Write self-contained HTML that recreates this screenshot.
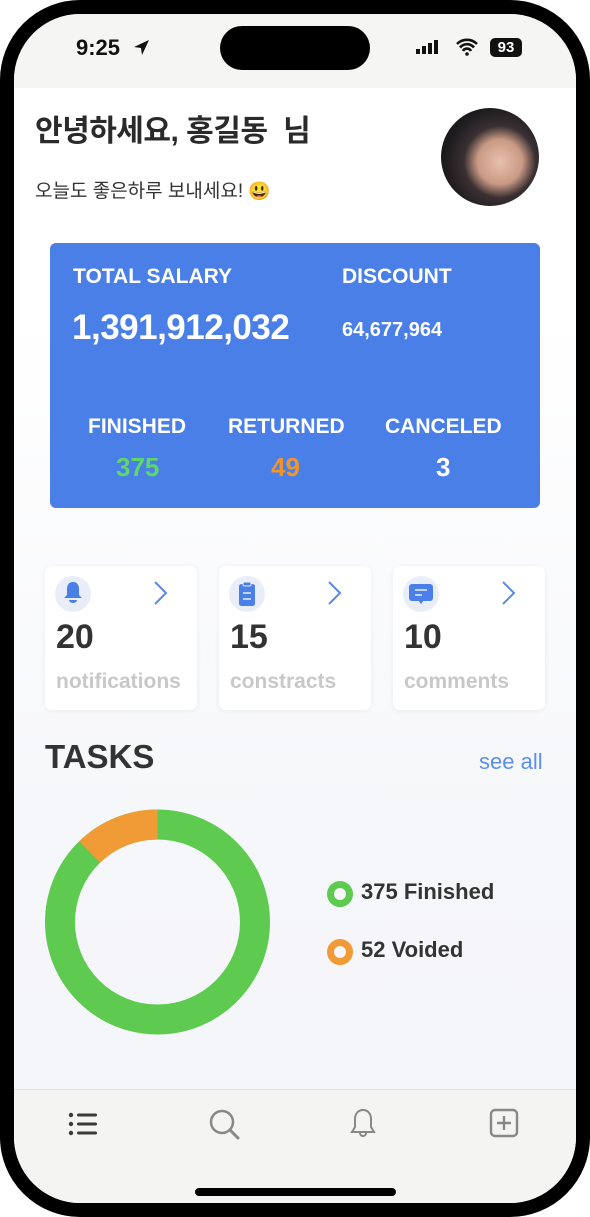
<!DOCTYPE html>
<html><head><meta charset="utf-8"><style>
*{margin:0;padding:0;box-sizing:border-box}
body{width:590px;height:1217px;background:#fff;font-family:"Liberation Sans","Noto Sans CJK KR",sans-serif;position:relative;overflow:hidden}
.frame{position:absolute;left:0;top:0;width:590px;height:1217px;border:14px solid #000;border-radius:80px;overflow:hidden;background:linear-gradient(#fff 0,#fff 300px,#f6f7fa 800px,#f5f6fa 1080px)}
.abs{position:absolute}
.status{left:0;top:0;width:562px;height:74px;background:#f5f5f3}
.card{background:#4a7fe8;border-radius:6px;left:36px;top:229px;width:490px;height:265px;color:#fff;font-weight:bold}
.sc{background:#fff;border-radius:7px;width:152px;height:144px;top:552px;box-shadow:0 1px 6px rgba(0,0,0,.06)}
.ic{left:10px;top:10px;width:36px;height:36px;border-radius:50%;background:#e8edf8}
.num{left:11px;top:52px;font-size:34px;font-weight:bold;color:#333}
.lbl{left:11px;top:104px;font-size:21px;font-weight:bold;color:#c8c8c8}
.chev{left:108px;top:14px}
.bot{left:0;top:1075px;width:562px;height:130px;background:#f4f4f2;border-top:1px solid #e2e2e2}
</style></head><body>
<div class="frame">
<div class="abs status"></div>
<div class="abs" style="left:62px;top:21px;font-size:22px;font-weight:bold;color:#111">9:25</div>
<svg class="abs" style="left:119px;top:25px" width="18" height="18" viewBox="0 0 18 18"><path d="M16 1L1 8l7 1 1 7z" fill="#111"/></svg>
<div class="abs" style="left:206px;top:12px;width:150px;height:44px;border-radius:22px;background:#000"></div>
<svg class="abs" style="left:401px;top:25px" width="30" height="16"><rect x="1" y="10" width="4" height="5" fill="#111"/><rect x="7" y="7" width="4" height="8" fill="#111"/><rect x="13" y="4" width="4" height="11" fill="#111"/><rect x="19" y="1" width="4" height="14" fill="#111"/></svg>
<svg class="abs" style="left:441px;top:24px" width="24" height="18" viewBox="0 0 24 18"><path d="M2 6a14 14 0 0 1 20 0M5 9.5a9 9 0 0 1 14 0M8 13a4.5 4.5 0 0 1 8 0" stroke="#111" stroke-width="2.6" fill="none"/><circle cx="12" cy="16" r="1.8" fill="#111"/></svg>
<div class="abs" style="left:476px;top:24px;width:32px;height:19px;border-radius:5px;background:#111;color:#fff;font-size:15px;font-weight:bold;text-align:center;line-height:19px">93</div>

<div class="abs" style="left:21px;top:92px;font-size:30px;font-weight:bold;color:#2a2a2a;letter-spacing:-0.5px">안녕하세요, 홍길동&nbsp; 님</div>
<div class="abs" style="left:21px;top:162px;font-size:19px;color:#333">오늘도 좋은하루 보내세요! <span style="font-size:18px">😃</span></div>
<div class="abs" style="left:427px;top:94px;width:98px;height:98px;border-radius:50%;background:radial-gradient(circle at 60% 55%,#e7c0ad 0,#c99a85 28%,#3a3032 45%,#1b1a1c 70%)"></div>

<div class="abs card">
<div class="abs" style="left:23px;top:22px;font-size:21px">TOTAL SALARY</div>
<div class="abs" style="left:292px;top:22px;font-size:21px">DISCOUNT</div>
<div class="abs" style="left:22px;top:65px;font-size:35px;letter-spacing:-0.5px">1,391,912,032</div>
<div class="abs" style="left:292px;top:76px;font-size:20px">64,677,964</div>
<div class="abs" style="left:38px;top:172px;font-size:21px">FINISHED</div>
<div class="abs" style="left:178px;top:172px;font-size:21px">RETURNED</div>
<div class="abs" style="left:335px;top:172px;font-size:21px">CANCELED</div>
<div class="abs" style="left:66px;top:209px;font-size:26px;color:#5fd66a">375</div>
<div class="abs" style="left:221px;top:209px;font-size:26px;color:#f0952e">49</div>
<div class="abs" style="left:386px;top:209px;font-size:26px">3</div>
</div>

<div class="abs sc" style="left:31px">
<div class="abs ic"></div>
<svg class="abs" style="left:16px;top:14px" width="24" height="26" viewBox="0 0 24 26"><path d="M12 2c-4 0-6 3-6 7v6l-3 3h18l-3-3V9c0-4-2-7-6-7z" fill="#4a7fe8"/><path d="M8 20a4 3 0 0 0 8 0z" fill="#4a7fe8"/></svg>
<svg class="abs chev" width="16" height="26"><path d="M2 2l11 11L2 24" stroke="#5b8ae8" stroke-width="2" fill="none"/></svg>
<div class="abs num">20</div><div class="abs lbl">notifications</div></div>

<div class="abs sc" style="left:205px">
<div class="abs ic"></div>
<svg class="abs" style="left:18px;top:14px" width="20" height="28" viewBox="0 0 20 28"><rect x="2" y="4" width="16" height="22" rx="2.5" fill="#4a7fe8"/><rect x="6" y="2" width="8" height="4" rx="1.5" fill="#4a7fe8" stroke="#e8edf8" stroke-width="1"/><path d="M6 13h8M6 19h8" stroke="#e8edf8" stroke-width="1.5"/></svg>
<svg class="abs chev" width="16" height="26"><path d="M2 2l11 11L2 24" stroke="#5b8ae8" stroke-width="2" fill="none"/></svg>
<div class="abs num">15</div><div class="abs lbl">constracts</div></div>

<div class="abs sc" style="left:379px">
<div class="abs ic"></div>
<svg class="abs" style="left:15px;top:17px" width="26" height="24" viewBox="0 0 26 24"><rect x="1" y="1" width="24" height="17" rx="3" fill="#4a7fe8"/><path d="M10 17l3 4 3-4z" fill="#4a7fe8"/><path d="M7 7h12M7 12h7" stroke="#e8edf8" stroke-width="1.6"/></svg>
<svg class="abs chev" width="16" height="26"><path d="M2 2l11 11L2 24" stroke="#5b8ae8" stroke-width="2" fill="none"/></svg>
<div class="abs num">10</div><div class="abs lbl">comments</div></div>

<div class="abs" style="left:31px;top:724px;font-size:33px;font-weight:bold;color:#333">TASKS</div>
<div class="abs" style="left:465px;top:735px;font-size:22px;color:#5b8ff0">see all</div>

<svg class="abs" style="left:0;top:0" width="562" height="1100">
<circle cx="143.5" cy="908" r="97.5" fill="none" stroke="#5ecb50" stroke-width="30"/>
<path d="M143.5 810.5A97.5 97.5 0 0 0 75.7 838" fill="none" stroke="#f09b35" stroke-width="30"/>
<circle cx="326" cy="880" r="9.5" fill="none" stroke="#5ecb50" stroke-width="7"/>
<circle cx="326" cy="938" r="9.5" fill="none" stroke="#f09b35" stroke-width="7"/>
</svg>
<div class="abs" style="left:347px;top:865px;font-size:22px;font-weight:bold;color:#333">375 Finished</div>
<div class="abs" style="left:347px;top:923px;font-size:22px;font-weight:bold;color:#333">52 Voided</div>

<div class="abs bot"></div>
<svg class="abs" style="left:52px;top:1096px" width="36" height="30"><g fill="#3a3a36"><circle cx="5" cy="5" r="2.2"/><circle cx="5" cy="14" r="2.2"/><circle cx="5" cy="23" r="2.2"/><rect x="11" y="3.5" width="20" height="3" rx="1.5"/><rect x="11" y="12.5" width="20" height="3" rx="1.5"/><rect x="11" y="21.5" width="20" height="3" rx="1.5"/></g></svg>
<svg class="abs" style="left:194px;top:1094px" width="36" height="36"><circle cx="14" cy="14" r="11" fill="none" stroke="#888" stroke-width="2.5"/><path d="M22 22l8 8" stroke="#888" stroke-width="3" stroke-linecap="round"/></svg>
<svg class="abs" style="left:334px;top:1093px" width="30" height="36"><path d="M15 3c-5 0-8 4-8 9v8l-3 5h22l-3-5v-8c0-5-3-9-8-9z" fill="none" stroke="#888" stroke-width="2"/><path d="M12 26a3 3 0 0 0 6 0" fill="none" stroke="#888" stroke-width="2"/></svg>
<svg class="abs" style="left:475px;top:1094px" width="32" height="32"><rect x="2" y="2" width="26" height="26" rx="4" fill="none" stroke="#888" stroke-width="2.4"/><path d="M15 8v14M8 15h14" stroke="#888" stroke-width="2.4"/></svg>
<div class="abs" style="left:181px;top:1174px;width:201px;height:8px;border-radius:4px;background:#000"></div>
</div>
</body></html>
